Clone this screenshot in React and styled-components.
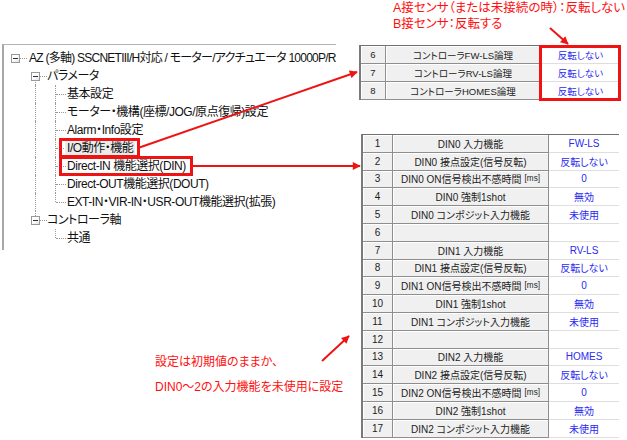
import React from 'react'
import styled, { createGlobalStyle } from 'styled-components'

const FONT = `"Liberation Sans", "Noto Sans CJK JP", sans-serif`
const RED = '#ee1414'

const GlobalStyle = createGlobalStyle`
  html, body { margin: 0; padding: 0; background: #fff; }
  body { font-family: ${FONT}; font-feature-settings: "palt"; }
`

const Page = styled.div`
  position: relative;
  width: 627px;
  height: 440px;
  overflow: hidden;
  display: flex;
  background: #fff;
  color: #111;
`

const LeftColumn = styled.div`
  width: 358px;
  flex: none;
  display: flex;
  flex-direction: column;
`

const RightColumn = styled.div`
  flex: 1;
  display: flex;
  flex-direction: column;
`

/* ---------- tree ---------- */

const TreePanel = styled.div`
  margin: 44px 0 0 2px;
  width: 334px;
  height: 206px;
  border-left: 2px solid #a8a8a8;
  border-top: 1px solid #b4b4b4;
  padding: 4px 0 0 1px;
  box-sizing: border-box;
`

const TreeRow = styled.div`
  display: flex;
  align-items: center;
  height: 18px;
`

const Gutter = styled.span`
  position: relative;
  width: 20px;
  height: 18px;
  flex: none;

  &::before {
    content: '';
    display: ${p => (p.$up || p.$down ? 'block' : 'none')};
    position: absolute;
    left: 10px;
    top: ${p => (p.$up ? '0' : '9px')};
    bottom: ${p => (p.$down ? '0' : '9px')};
    border-left: 1px dotted #9a9a9a;
  }

  &::after {
    content: '';
    display: ${p => (p.$tick || p.$box ? 'block' : 'none')};
    position: absolute;
    top: 9px;
    left: ${p => (p.$box ? '15px' : '11px')};
    width: ${p => (p.$box ? '7px' : '10px')};
    border-top: 1px dotted #9a9a9a;
  }
`

const ExpandBox = styled.span`
  position: absolute;
  left: 6px;
  top: 5px;
  width: 7px;
  height: 7px;
  border: 1px solid #989898;
  background: linear-gradient(135deg, #fff 40%, #e4e4e4);
  z-index: 1;

  &::before {
    content: '';
    position: absolute;
    left: 1px;
    top: 3px;
    width: 5px;
    height: 1px;
    background: #303030;
  }
`

const TreeLabel = styled.span`
  position: relative;
  display: inline-block;
  margin-left: ${p => (p.$root ? '2px' : '0')};
  padding: 0 2px;
  height: 18px;
  line-height: 18px;
  font-size: 12px;
  letter-spacing: ${p => (p.$root ? '-0.75px' : '-0.45px')};
  white-space: nowrap;
  background: ${p => (p.$selected ? '#ebebeb' : 'transparent')};

  &::after {
    content: '';
    display: ${p => (p.$marked ? 'block' : 'none')};
    position: absolute;
    left: -6px;
    right: -5px;
    top: -1px;
    bottom: -1px;
    border: 3px solid ${RED};
  }
`

const Note = styled.div`
  color: #ff1010;
  font-size: ${p => p.$size}px;
  line-height: ${p => p.$lineHeight}px;
  padding-left: ${p => p.$indent}px;
  margin-top: ${p => p.$top}px;
  white-space: nowrap;
`

/* ---------- tables ---------- */

const Table = styled.div`
  position: relative;
  margin-top: ${p => p.$top}px;
  margin-left: ${p => p.$left}px;
  width: ${p => p.$width}px;
  border-top: 1px solid #707070;
  border-left: 2px solid #7a7a7a;
  font-size: ${p => p.$font}px;
`

const Row = styled.div`
  display: grid;
  grid-template-columns: ${p => p.$cols};
  height: ${p => p.$height}px;
`

const Cell = styled.div`
  display: flex;
  align-items: center;
  justify-content: center;
  white-space: nowrap;
  overflow: hidden;
  box-sizing: border-box;
  background: #f0f0f0;
  color: #1c1c1c;
  border-right: 1px solid #8e8e8e;
  border-bottom: 1px solid #8e8e8e;
  box-shadow: inset 1px 1px 0 #fff;
`

const ValueCell = styled.div`
  display: flex;
  align-items: center;
  justify-content: center;
  white-space: nowrap;
  box-sizing: border-box;
  background: #fff;
  color: #2a2af0;
  border-bottom: 1px solid #dedede;
`

const Small = styled.span`
  font-size: 0.82em;
  margin-left: 3px;
`

const RedFrame = styled.div`
  position: absolute;
  top: -1px;
  bottom: -1px;
  left: ${p => p.$left}px;
  right: -1px;
  border: 3px solid ${RED};
`

const Arrows = styled.svg`
  position: absolute;
  left: 0;
  top: 0;
  pointer-events: none;
`

const treeRows = [
  { cells: [{ box: true }], label: 'AZ (多軸) SSCNETIII/H対応 / モーター/アクチュエータ 10000P/R', root: true },
  { cells: [{}, { box: true, down: true }], label: 'パラメータ' },
  { cells: [{}, { up: true, down: true }, { up: true, down: true, tick: true }], label: '基本設定' },
  { cells: [{}, { up: true, down: true }, { up: true, down: true, tick: true }], label: 'モーター・機構(座標/JOG/原点復帰)設定' },
  { cells: [{}, { up: true, down: true }, { up: true, down: true, tick: true }], label: 'Alarm・Info設定' },
  { cells: [{}, { up: true, down: true }, { up: true, down: true, tick: true }], label: 'I/O動作・機能', marked: true, selected: true },
  { cells: [{}, { up: true, down: true }, { up: true, down: true, tick: true }], label: 'Direct-IN 機能選択(DIN)', marked: true },
  { cells: [{}, { up: true, down: true }, { up: true, down: true, tick: true }], label: 'Direct-OUT機能選択(DOUT)' },
  { cells: [{}, { up: true, down: true }, { up: true, tick: true }], label: 'EXT-IN・VIR-IN・USR-OUT機能選択(拡張)' },
  { cells: [{}, { up: true, box: true }], label: 'コントローラ軸' },
  { cells: [{}, {}, { up: true, tick: true }], label: '共通' },
]

const logicRows = [
  ['6', 'コントローラFW-LS論理', '反転しない'],
  ['7', 'コントローラRV-LS論理', '反転しない'],
  ['8', 'コントローラHOMES論理', '反転しない'],
]

const dinRows = []
;[['0', 'FW-LS'], ['1', 'RV-LS'], ['2', 'HOMES']].forEach(([n, fn], i) => {
  const base = i * 6
  dinRows.push([base + 1, `DIN${n} 入力機能`, fn])
  dinRows.push([base + 2, `DIN${n} 接点設定(信号反転)`, '反転しない'])
  dinRows.push([base + 3, `DIN${n} ON信号検出不感時間`, '0', true])
  dinRows.push([base + 4, `DIN${n} 強制1shot`, '無効'])
  dinRows.push([base + 5, `DIN${n} コンポジット入力機能`, '未使用'])
  if (i < 2) dinRows.push([base + 6, '', ''])
})

function Tree() {
  return (
    <TreePanel>
      {treeRows.map((row, i) => (
        <TreeRow key={i}>
          {row.cells.map((c, j) => (
            <Gutter key={j} $up={c.up} $down={c.down} $tick={c.tick} $box={c.box}>
              {c.box && <ExpandBox />}
            </Gutter>
          ))}
          <TreeLabel $root={row.root} $marked={row.marked} $selected={row.selected}>
            {row.label}
          </TreeLabel>
        </TreeRow>
      ))}
    </TreePanel>
  )
}

export default function App() {
  return (
    <>
      <GlobalStyle />
      <Page>
        <LeftColumn>
          <Tree />
          <Note $size={12} $lineHeight={25} $indent={155} $top={100}>
            設定は初期値のままか、
            <br />
            DIN0～2の入力機能を未使用に設定
          </Note>
        </LeftColumn>

        <RightColumn>
          <Note $size={12.5} $lineHeight={16} $indent={35} $top={0}>
            A接センサ（または未接続の時）：反転しない
            <br />
            B接センサ：反転する
          </Note>

          <Table $top={13} $left={1} $width={259} $font={9.5}>
            {logicRows.map(([no, label, value]) => (
              <Row key={no} $cols="25px 155px 79px" $height={18}>
                <Cell>{no}</Cell>
                <Cell>{label}</Cell>
                <ValueCell>{value}</ValueCell>
              </Row>
            ))}
            <RedFrame $left={178} />
          </Table>

          <Table $top={34} $left={3} $width={256} $font={10}>
            {dinRows.map(([no, label, value, ms]) => (
              <Row key={no} $cols="30px 156px 70px" $height={17.8}>
                <Cell>{no}</Cell>
                <Cell>
                  {label}
                  {ms && <Small>[ms]</Small>}
                </Cell>
                <ValueCell>{value}</ValueCell>
              </Row>
            ))}
          </Table>
        </RightColumn>

        <Arrows width="627" height="440" viewBox="0 0 627 440">
          <defs>
            <marker id="head" viewBox="0 0 10 10" refX="9" refY="5" markerWidth="9" markerHeight="8"
              markerUnits="userSpaceOnUse" orient="auto">
              <path d="M0 0 L10 5 L0 10 Z" fill={RED} />
            </marker>
          </defs>
          <g stroke={RED} strokeWidth="2" fill="none" markerEnd="url(#head)">
            <line x1="138" y1="148" x2="357" y2="72" />
            <line x1="192" y1="166" x2="360" y2="166" />
            <line x1="322" y1="361" x2="349" y2="336" />
            <line x1="550" y1="28" x2="568" y2="44" />
          </g>
        </Arrows>
      </Page>
    </>
  )
}
